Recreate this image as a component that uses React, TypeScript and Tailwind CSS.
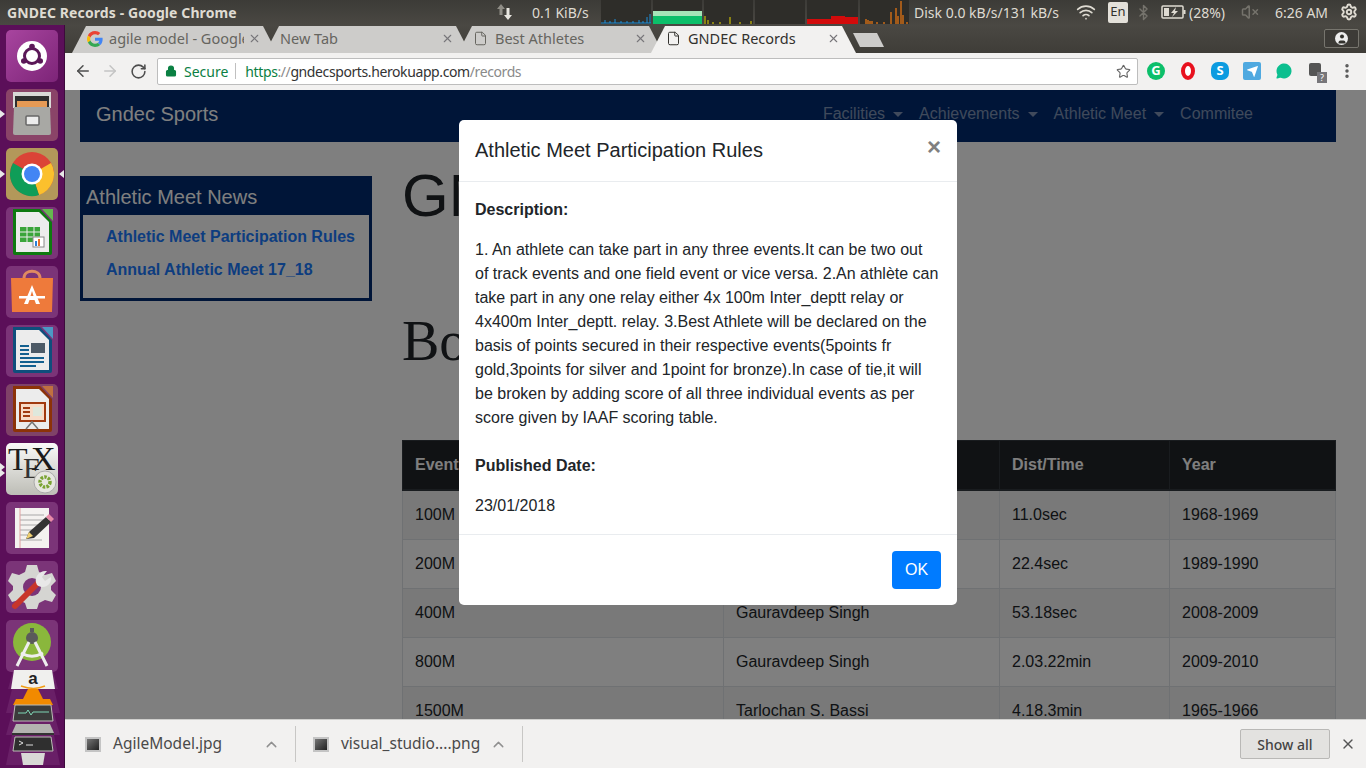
import { ArrowLeft, ArrowRight, Bluetooth, ChevronUp, File, Lock, RotateCw, Send, Star, User, VolumeX, Wifi, X, Settings, MoreVertical, MessageCircle } from "lucide-react";

const rows = [
  { ev: "100M", name: "", dist: "11.0sec", year: "1968-1969" },
  { ev: "200M", name: "", dist: "22.4sec", year: "1989-1990" },
  { ev: "400M", name: "Gauravdeep Singh", dist: "53.18sec", year: "2008-2009" },
  { ev: "800M", name: "Gauravdeep Singh", dist: "2.03.22min", year: "2009-2010" },
  { ev: "1500M", name: "Tarlochan S. Bassi", dist: "4.18.3min", year: "1965-1966" },
];

const Graph = ({ children, w = 49 }: { children?: React.ReactNode; w?: number }) => (
  <svg width={w} height={24} viewBox={`0 0 ${w} 24`} className="block shrink-0 bg-[#2e2d29]">
    {children}
  </svg>
);

const TopBar = () => (
  <div className="flex h-[25px] shrink-0 items-center bg-gradient-to-b from-[#3c3b37] to-[#4a4843] pb-[1px] font-['Noto_Sans',sans-serif] text-[14px] text-[#dfdbd2]">
    <div className="w-[496px] pl-[7px] text-[14px] font-bold tracking-[0.1px] whitespace-nowrap">GNDEC Records - Google Chrome</div>
    <svg width="18" height="18" viewBox="0 0 18 18" className="shrink-0">
      <path d="M5 1l4 5H6.500v6h-3V6H1z" fill="#8f8d86" />
      <path d="M12 17l-4-5h2.500V5h3v7H16z" fill="#e8e6e0" />
    </svg>
    <div className="w-[87px] pl-[18px] whitespace-nowrap">0.1 KiB/s</div>
    <div className="flex gap-[2px]">
      <Graph w={50}>
        <path d="M0 23h50M4 23v-3M9 23v-2M14 23v-4M20 23v-2M26 23v-2M32 23v-2M38 23v-3M42 23v-2M46 23v-6M49 23v-9" stroke="#1f8fd8" strokeWidth="1" />
      </Graph>
      <Graph w={49}>
        <rect x="0" y="11" width="49" height="5" fill="#a5e5b8" />
        <rect x="0" y="16" width="49" height="8" fill="#0cbf6a" />
      </Graph>
      <Graph w={49}>
        <path d="M1 24v-8M4 24v-4M9 24v-2M16 24v-2M26 24v-7M36 24v-2M47 24v-3" stroke="#e6d800" strokeWidth="1" />
      </Graph>
      <Graph w={50} />
      <Graph w={51}>
        <path d="M0 24v-5h24v-3h14v1h13v7z" fill="#d20b0b" />
      </Graph>
      <Graph w={49}>
        <path d="M6 24v-5M8 24v-4M10 24v-3M12 24v-3M17 24v-2M24 24v-2M31 24v-12M36 24v-16M38 24v-8M41 24v-23M43 24v-9M47 24v-2" stroke="#f07a12" strokeWidth="1.200" />
      </Graph>
    </div>
    <div className="w-[167px] pl-[5px] whitespace-nowrap">Disk 0.0 kB/s/131 kB/s</div>
    <Wifi size={20} strokeWidth={2} className="shrink-0 text-[#dfdbd2]" />
    <div className="ml-[12px] flex h-[21px] w-[20px] shrink-0 items-center justify-center rounded-[2px] bg-[#e4e1da] text-[13px] text-[#33322e]">En</div>
    <Bluetooth size={17} className="ml-[7px] shrink-0 text-[#75736c]" />
    <svg width="26" height="16" viewBox="0 0 26 16" className="ml-[9px] shrink-0">
      <rect x="1" y="2" width="21" height="12" rx="1" fill="none" stroke="#dfdbd2" strokeWidth="1.500" />
      <rect x="22.500" y="6" width="2" height="4" fill="#dfdbd2" />
      <rect x="3" y="4" width="5" height="8" fill="#dfdbd2" />
      <path d="M15 3l-5 6h3l-2 4 6-6h-3z" fill="#dfdbd2" />
    </svg>
    <div className="ml-[2px] w-[42px] whitespace-nowrap text-[14px]">(28%)</div>
    <VolumeX size={18} className="ml-[10px] shrink-0 text-[#75736c]" />
    <div className="ml-[16px] w-[58px] whitespace-nowrap">6:26 AM</div>
    <Settings size={18} strokeWidth={2.600} className="ml-[7px] shrink-0 text-[#dfdbd2]" />
  </div>
);

const GoogleG = () => (
  <svg width="16" height="16" viewBox="0 0 48 48" className="shrink-0">
    <path fill="#EA4335" d="M24 9.500c3.500 0 6.700 1.300 9.100 3.500l6.800-6.800C35.800 2.400 30.300 0 24 0 14.600 0 6.500 5.400 2.600 13.200l7.900 6.100C12.400 13.700 17.700 9.500 24 9.500z" />
    <path fill="#4285F4" d="M46.900 24.500c0-1.600-.1-3.100-.4-4.500H24v9h12.900c-.6 3-2.200 5.500-4.700 7.200l7.700 6c4.500-4.200 7-10.300 7-17.700z" />
    <path fill="#FBBC05" d="M10.500 28.700c-.5-1.400-.8-3-.8-4.700s.3-3.200.8-4.700l-7.900-6.100C.900 16.500 0 20.100 0 24s.9 7.500 2.600 10.800l7.900-6.100z" />
    <path fill="#34A853" d="M24 48c6.500 0 11.900-2.100 15.900-5.800l-7.700-6c-2.100 1.400-4.900 2.300-8.200 2.300-6.300 0-11.600-4.200-13.500-9.900l-7.900 6.100C6.500 42.600 14.600 48 24 48z" />
  </svg>
);

const Tab = ({ title, icon, active, z }: { title: string; icon?: React.ReactNode; active?: boolean; z: string }) => (
  <div className={`relative -mr-[12px] flex h-[27px] w-[205px] shrink-0 items-center pr-[16px] pb-[2px] pl-[15px] [clip-path:polygon(0_100%,14px_0,calc(100%-14px)_0,100%_100%)] ${z} ${active ? "bg-[#f2f1f0] text-[#33322e]" : "bg-[#cdccca] text-[#66655f]"}`}>
    {icon && <span className="mr-[7px] flex w-[15px] shrink-0 justify-center">{icon}</span>}
    <span className="min-w-0 flex-1 overflow-hidden text-[14.500px] whitespace-nowrap">{title}</span>
    <X size={13} strokeWidth={2} className="ml-[4px] shrink-0 text-[#77767a]" />
  </div>
);

const TabStrip = () => (
  <div className="flex h-[28px] shrink-0 items-end bg-gradient-to-b from-[#4a4843] to-[#3f3d38] pl-[7px] font-['Noto_Sans',sans-serif]">
    <Tab title="agile model - Google" icon={<GoogleG />} z="z-[1]" />
    <Tab title="New Tab" z="z-[2]" />
    <Tab title="Best Athletes" icon={<File size={15} strokeWidth={1.600} />} z="z-[3]" />
    <Tab title="GNDEC Records" icon={<File size={15} strokeWidth={1.600} />} active z="z-[4]" />
    <div className="mb-[6px] ml-[9px] h-[14px] w-[31px] bg-[#cdccca] [clip-path:polygon(0_0,calc(100%-7px)_0,100%_100%,7px_100%)]" />
    <div className="mr-[7px] mb-[5px] ml-auto flex h-[19px] w-[35px] items-center justify-center self-end rounded-[2px] border border-[#77756e] bg-[#3d3b37]">
      <span className="flex h-[13px] w-[13px] items-center justify-center overflow-hidden rounded-full bg-[#eee]">
        <User size={12} fill="#33322e" strokeWidth={0} />
      </span>
    </div>
  </div>
);

const Toolbar = () => (
  <div className="flex h-[37px] shrink-0 items-center bg-[#f2f1f0] pb-[1px] font-['Noto_Sans',sans-serif]">
    <div className="flex w-[92px] shrink-0 items-center gap-[9px] pl-[9px]">
      <ArrowLeft size={18} strokeWidth={2} className="text-[#4d4d4d]" />
      <ArrowRight size={18} strokeWidth={2} className="text-[#c4c4c4]" />
      <RotateCw size={17} strokeWidth={2.200} className="ml-[2px] text-[#4d4d4d]" />
    </div>
    <div className="flex h-[27px] w-[981px] shrink-0 items-center rounded-[2px] border border-[#bdbdbd] bg-white pr-[6px] pl-[7px] text-[14px] whitespace-nowrap">
      <Lock size={12} fill="#0b8043" strokeWidth={2.200} className="shrink-0 text-[#0b8043]" />
      <span className="ml-[7px] text-[#0b8043]">Secure</span>
      <span className="ml-[7px] h-[16px] w-px bg-[#c0c0c0]" />
      <span className="ml-[9px] text-[14px] tracking-[-0.4px]">
        <span className="text-[#0b8043]">https</span>
        <span className="text-[#8a8a8a]">://</span>
        <span className="text-[#333]">gndecsports.herokuapp.com</span>
        <span className="text-[#8a8a8a]">/records</span>
      </span>
      <Star size={15} strokeWidth={1.800} className="ml-auto text-[#666]" />
    </div>
    <div className="flex flex-1 items-center gap-[14px] pl-[9px]">
      <span className="flex h-[18px] w-[18px] items-center justify-center rounded-full bg-[#0cbf6a] text-[13px] font-bold text-white">G</span>
      <span className="flex h-[18px] w-[18px] justify-center">
        <span className="h-[18px] w-[14px] rounded-[50%] border-[4px] border-[#e8111e] bg-white" />
      </span>
      <span className="flex h-[18px] w-[18px] items-center justify-center rounded-[7px] bg-[#0c9be0] text-[13px] font-bold text-white">S</span>
      <span className="flex h-[18px] w-[18px] items-center justify-center rounded-[2px] bg-[#4fa9e0]">
        <Send size={13} fill="#fff" strokeWidth={0} />
      </span>
      <MessageCircle size={18} fill="#0cbf8f" strokeWidth={0} className="shrink-0" />
      <span className="relative h-[18px] w-[18px]">
        <span className="absolute top-[1px] left-[2px] h-[13px] w-[12px] rounded-[2px] bg-[#555]" />
        <span className="absolute -right-[2px] -bottom-[3px] flex h-[11px] w-[10px] items-center justify-center bg-[#77767a] text-[9px] leading-none text-white">?</span>
      </span>
      <MoreVertical size={18} strokeWidth={2.600} className="-ml-[1px] shrink-0 text-[#555]" />
    </div>
  </div>
);

const Tile = ({ bg, marks, children }: { bg: string; marks?: React.ReactNode; children: React.ReactNode }) => (
  <div className={`relative h-[52px] w-[52px] shrink-0 rounded-[5px] ${bg}`}>
    <svg width="52" height="52" viewBox="0 0 52 52" className="block">{children}</svg>
    {marks}
  </div>
);

const LeftMark = ({ top = 22 }: { top?: number }) => (
  <svg width="5" height="8" viewBox="0 0 5 8" className="absolute -left-[6px]" style={{ top }}>
    <path d="M0 0l5 4-5 4z" fill="#e8e8e8" />
  </svg>
);

const Launcher = () => (
  <div className="flex w-[65px] shrink-0 flex-col gap-[7px] overflow-hidden border-r border-[#3d0a3c] bg-[#5b0f59] pt-[5px] pl-[6px]">
    <Tile bg="bg-gradient-to-br from-[#a8459f] to-[#7d2478]">
      <circle cx="26" cy="26" r="15" fill="#fff" />
      <circle cx="26" cy="26" r="7.500" fill="none" stroke="#5b1858" strokeWidth="3" />
      <circle cx="26" cy="16.500" r="2.800" fill="#5b1858" />
      <circle cx="17.800" cy="31" r="2.800" fill="#5b1858" />
      <circle cx="34.200" cy="31" r="2.800" fill="#5b1858" />
    </Tile>
    <Tile bg="bg-[#8a4468]" marks={<LeftMark top={21} />}>
      <path d="M7 3h38v16H7z" fill="#d9d9d6" />
      <path d="M9 7h34v11H9z" fill="#2e2e2e" />
      <rect x="11" y="12" width="30" height="6" fill="#e69a55" />
      <path d="M8 18h36l1 26a2 2 0 0 1-2 2H9a2 2 0 0 1-2-2z" fill="#a8a8a4" />
      <rect x="20" y="27" width="13" height="9" rx="1" fill="#ececec" stroke="#666" strokeWidth="1.500" />
    </Tile>
    <Tile bg="bg-[#b3985a]" marks={<><LeftMark top={22} /><svg width="5" height="8" viewBox="0 0 5 8" className="absolute -right-[6px] top-[22px]"><path d="M5 0L0 4l5 4z" fill="#e8e8e8" /></svg></>}>
      <circle cx="26" cy="26" r="22" fill="#db4437" />
      <path d="M26 26L45 15a22 22 0 0 1-12 32z" fill="#fbc02d" />
      <path d="M26 26L33 47A22 22 0 0 1 7 15z" fill="#0f9d58" />
      <circle cx="26" cy="26" r="10.500" fill="#fff" />
      <circle cx="26" cy="26" r="8" fill="#4285f4" />
    </Tile>
    <Tile bg="bg-[#7b3478]">
      <path d="M7 2h27l12 13v31a2 2 0 0 1-2 2H9a2 2 0 0 1-2-2z" fill="#0e7a10" />
      <path d="M10 5h23l10 10v30H10z" fill="#ececec" />
      <path d="M36 2h11v12z" fill="#65b84f" />
      <path d="M14 20h20v15H14z" fill="#3aa53a" />
      <path d="M14 25h20M14 30h20M21 20v15M28 20v15" stroke="#ececec" />
      <rect x="27" y="30" width="11" height="10" fill="#fff" stroke="#888" />
      <rect x="29" y="34" width="2" height="5" fill="#2a7fd5" />
      <rect x="32" y="32" width="2" height="7" fill="#e5702a" />
    </Tile>
    <Tile bg="bg-[#7b3478]">
      <path d="M5 12h42l-1 34H6z" fill="#ee7a3b" />
      <path d="M18 12c0-9 16-9 16 0" fill="none" stroke="#e08a60" strokeWidth="3" />
      <path d="M26 19l-8 19h4l1.500-4h5l1.500 4h4zM24.500 30l1.500-5 1.500 5z" fill="#fff" fillRule="evenodd" />
      <rect x="13" y="30" width="26" height="2.500" fill="#fff" />
    </Tile>
    <Tile bg="bg-[#7b3478]">
      <path d="M7 2h27l12 13v31a2 2 0 0 1-2 2H9a2 2 0 0 1-2-2z" fill="#0f4e7c" />
      <path d="M10 5h23l10 10v30H10z" fill="#ececec" />
      <path d="M36 2h11v12z" fill="#4c98c4" />
      <rect x="25" y="18" width="14" height="10" fill="#4d5a66" />
      <path d="M14 21h9M14 25h9M14 29h9M14 33h24M14 37h24M14 41h16" stroke="#14608f" strokeWidth="2" />
    </Tile>
    <Tile bg="bg-[#7f4268]">
      <path d="M7 2h27l12 13v31a2 2 0 0 1-2 2H9a2 2 0 0 1-2-2z" fill="#8c3208" />
      <path d="M10 5h23l10 10v30H10z" fill="#ececec" />
      <path d="M36 2h11v12z" fill="#c07040" />
      <rect x="14" y="19" width="25" height="18" fill="#f8dcc8" stroke="#a03a10" strokeWidth="2" />
      <path d="M17 24h7M17 28h7M17 32h7" stroke="#a03a10" strokeWidth="2" />
      <rect x="27" y="23" width="9" height="9" fill="#dfe8dc" />
      <path d="M20 45l6-7 6 7" fill="none" stroke="#777" strokeWidth="1.500" />
    </Tile>
    <Tile bg="bg-gradient-to-b from-[#fafaf8] to-[#bdbdb6]" marks={<><LeftMark top={20} /><LeftMark top={26} /></>}>
      <text x="2" y="27" fontFamily="Liberation Serif, serif" fontSize="32" fill="#1f1f1f">T</text>
      <text x="17" y="35" fontFamily="Liberation Serif, serif" fontSize="30" fill="#333">E</text>
      <text x="25" y="27" fontFamily="Liberation Serif, serif" fontSize="34" fill="#1a1a1a">X</text>
      <circle cx="39" cy="39" r="11" fill="#e6e6e0" stroke="#aaa" />
      <circle cx="39" cy="39" r="5" fill="none" stroke="#79a332" strokeWidth="3.500" strokeDasharray="2.500 1.200" />
    </Tile>
    <Tile bg="bg-[#7b3478]">
      <rect x="9" y="6" width="34" height="40" fill="#f4f2f0" />
      <path d="M14 13h24M14 18h24M14 23h20M14 28h18M14 33h12M14 38h22" stroke="#a8a8a8" />
      <path d="M14 6v40" stroke="#e0a0a0" />
      <path d="M20 37l3-7 17-15 5 5-17 16z" fill="#333" />
      <path d="M40 15l3-3 5 5-3 3z" fill="#e88aa8" />
      <path d="M20 37l3-7 4 4z" fill="#f0d070" />
    </Tile>
    <Tile bg="bg-[#7b3478]">
      <path d="M21 4h10l2 7 6 3 7-2 4 8-5 5v4l5 5-4 7-7-2-6 3-2 6H21l-2-6-6-3-7 2-4-7 5-5v-4l-5-5 4-8 7 2 6-3z" fill="#d5d5d2" />
      <circle cx="26" cy="26" r="9" fill="#7b3478" />
      <path d="M9 45l24-24" stroke="#c8352a" strokeWidth="6" strokeLinecap="round" />
      <path d="M31 24c-4-7 2-15 10-14l-5 6 3 4 6-4c1 8-7 13-14 8z" fill="#e8e8e8" />
    </Tile>
    <Tile bg="bg-[#7b3478]">
      <circle cx="26" cy="22" r="19" fill="#8ab73c" />
      <circle cx="26" cy="18" r="6" fill="#5a5a5a" />
      <path d="M24 8h4v4h-4z" fill="#5a5a5a" />
      <path d="M23 22L11 46M29 22l12 24M15 33c7 4 15 4 22 0" fill="none" stroke="#eee" strokeWidth="3" />
    </Tile>
    <svg width="58" height="101" viewBox="0 0 58 101" className="-mt-[12px] block shrink-0 -translate-x-[2px]">
      <path d="M10 0h38l6 22H4zM8 22h42l6 24H2zM8 46h42l6 22H2zM8 68h42l6 30H2z" fill="#7b3478" fillOpacity="0.45" />
      <path d="M10 3h38l3 19H7z" fill="#f0f0ee" />
      <text x="29" y="17" textAnchor="middle" fontFamily="Liberation Sans, sans-serif" fontWeight="700" fontSize="17" fill="#222">a</text>
      <path d="M17 19c8 3 17 3 24 0" stroke="#f39c12" strokeWidth="1.500" fill="none" />
      <path d="M24 22h10l5 10H19z" fill="#f28a00" />
      <path d="M12 32h34l3 6H9z" fill="#f28a00" />
      <path d="M11 38h36l2 16H9z" fill="#3b3b3b" stroke="#bdbdb8" />
      <path d="M14 46h8l2-3 3 5 2-3h16" stroke="#7ed6b5" fill="none" />
      <path d="M12 57h34l4 9H8z" fill="#b3b3b0" />
      <path d="M8 66h42v2H8z" fill="#333" />
      <path d="M11 70h36l2 14H9z" fill="#2f2f2f" stroke="#bdbdb8" />
      <path d="M15 74l4 2-4 2M22 78h7" stroke="#ddd" fill="none" />
      <path d="M17 86h24l-2 12H19z" fill="#d9d9d6" />
    </svg>
  </div>
);

const NavLink = ({ label, caret }: { label: string; caret?: boolean }) => (
  <div className="flex items-center px-[8px] text-[rgba(255,255,255,0.5)]">
    {label}
    {caret && <span className="ml-[8px] h-0 w-0 border-x-[5px] border-t-[5px] border-x-transparent border-t-[rgba(255,255,255,0.5)]" />}
  </div>
);

const Page = () => (
  <div className="relative min-h-0 flex-1 overflow-hidden bg-white font-['Liberation_Sans',sans-serif] text-[16px] text-[#212529]">
    <div className="pr-[30px] pl-[15px]">
      <div className="flex h-[52px] items-center bg-[#002a70] pr-[75px] pb-[4px] pl-[16px]">
        <span className="text-[20px] text-white">Gndec Sports</span>
        <div className="ml-auto flex">
          <NavLink label="Facilities" caret />
          <NavLink label="Achievements" caret />
          <NavLink label="Athletic Meet" caret />
          <NavLink label="Commitee" />
        </div>
      </div>
      <div className="flex">
        <div className="mt-[34px] h-[125px] w-[292px] shrink-0 border-[3px] border-[#002a70]">
          <div className="h-[36px] bg-[#002a70] pl-[3px] text-[20px] leading-[37px] text-white">Athletic Meet News</div>
          <div className="flex flex-col gap-[9px] pt-[10px] pl-[23px] font-bold text-[#1a7aff]">
            <div>Athletic Meet Participation Rules</div>
            <div>Annual Athletic Meet 17_18</div>
          </div>
        </div>
        <div className="ml-[30px] flex-1 pt-[18px]">
          <h1 className="mb-[76px] h-[72px] text-[60px] leading-[72px] whitespace-nowrap">GNDEC Records</h1>
          <h2 className="mb-[65px] h-[67px] font-['Liberation_Serif',serif] text-[56px] leading-[67px] whitespace-nowrap">Boys</h2>
          <table className="w-[933px] table-fixed border-collapse">
            <colgroup>
              <col className="w-[321px]" />
              <col className="w-[276px]" />
              <col className="w-[170px]" />
              <col className="w-[166px]" />
            </colgroup>
            <thead>
              <tr className="bg-[#212529] text-left font-bold text-white">
                {["Event", "Name", "Dist/Time", "Year"].map((h) => (
                  <th key={h} className="border border-b-2 border-[#32383e] p-[12px] leading-[24px]">{h}</th>
                ))}
              </tr>
            </thead>
            <tbody>
              {rows.map((r, i) => (
                <tr key={r.ev} className={i % 2 === 0 ? "bg-[rgba(0,0,0,0.05)]" : ""}>
                  <td className="border border-[#dee2e6] p-[12px] leading-[24px]">{r.ev}</td>
                  <td className="border border-[#dee2e6] p-[12px] leading-[24px]">{r.name}</td>
                  <td className="border border-[#dee2e6] p-[12px] leading-[24px]">{r.dist}</td>
                  <td className="border border-[#dee2e6] p-[12px] leading-[24px]">{r.year}</td>
                </tr>
              ))}
            </tbody>
          </table>
        </div>
      </div>
    </div>
    {/* modal backdrop */}
    <div className="absolute inset-0 bg-black/50 pt-[30px] pl-[394px]">
      <div className="flex h-[485px] w-[498px] flex-col rounded-[5px] bg-white">
        <div className="flex h-[62px] shrink-0 items-center justify-between border-b border-[#e9ecef] px-[16px] pb-[2px]">
          <span className="text-[20px]">Athletic Meet Participation Rules</span>
          <span className="-mt-[6px] text-[24px] leading-none font-bold text-[#808080]">×</span>
        </div>
        <div className="flex-1 px-[16px] pt-[16px] leading-[24px]">
          <p className="mb-[16px] font-bold">Description:</p>
          <p className="mb-[24px]">
            1. An athlete can take part in any three events.It can be two out<br />
            of track events and one field event or vice versa. 2.An athlète can<br />
            take part in any one relay either 4x 100m Inter_deptt relay or<br />
            4x400m Inter_deptt. relay. 3.Best Athlete will be declared on the<br />
            basis of points secured in their respective events(5points fr<br />
            gold,3points for silver and 1point for bronze).In case of tie,it will<br />
            be broken by adding score of all three individual events as per<br />
            score given by IAAF scoring table.
          </p>
          <p className="mb-[16px] font-bold">Published Date:</p>
          <p>23/01/2018</p>
        </div>
        <div className="flex h-[71px] shrink-0 items-center justify-end border-t border-[#e9ecef] px-[16px]">
          <button className="h-[38px] w-[49px] rounded-[4px] bg-[#007bff] text-white">OK</button>
        </div>
      </div>
    </div>
  </div>
);

const DownloadItem = ({ name, w, pl }: { name: string; w: string; pl: string }) => (
  <div className={`flex h-[36px] items-center border-r border-[#c8c7c5] ${pl} ${w}`}>
    <span className="h-[15px] w-[16px] shrink-0 border-2 border-[#c4c4c4] bg-gradient-to-br from-[#777] to-[#222]" />
    <span className="ml-[12px] text-[15.500px] whitespace-nowrap text-[#4a4a4a]">{name}</span>
    <ChevronUp size={17} strokeWidth={2} className="mr-[15px] ml-auto shrink-0 text-[#909090]" />
  </div>
);

const DownloadBar = () => (
  <div className="flex h-[49px] shrink-0 items-center border-t border-[#cfcfcd] bg-[#f2f1f0] font-['Noto_Sans',sans-serif]">
    <DownloadItem name="AgileModel.jpg" w="w-[231px]" pl="pl-[20px]" />
    <DownloadItem name="visual_studio....png" w="w-[227px]" pl="pl-[17px]" />
    <button className="mr-[10px] ml-auto h-[30px] w-[90px] rounded-[2px] border border-[#b9b8b6] bg-[#e3e2e0] text-[14px] font-medium text-[#444]">Show all</button>
    <X size={16} strokeWidth={2} className="mr-[10px] text-[#555]" />
  </div>
);

export default function App() {
  return (
    <div className="flex h-[768px] w-[1366px] flex-col overflow-hidden">
      <TopBar />
      <div className="flex min-h-0 flex-1">
        <Launcher />
        <div className="flex min-w-0 flex-1 flex-col">
          <TabStrip />
          <Toolbar />
          <Page />
          <DownloadBar />
        </div>
      </div>
    </div>
  );
}
